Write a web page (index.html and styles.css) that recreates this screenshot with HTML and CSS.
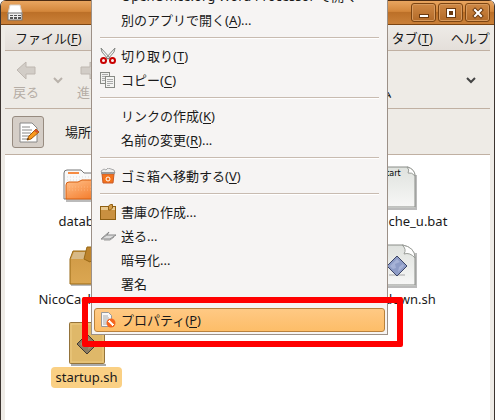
FILE: index.html
```html
<!DOCTYPE html>
<html lang="ja">
<head>
    <meta charset="UTF-8">
    <meta name="viewport" content="width=device-width, initial-scale=1.0">
    <title>ファイルブラウザ</title>
    <link rel="stylesheet" href="styles.css">
</head>
<body>
    <div class="window">
        <header class="titlebar">
            <svg class="app-icon" width="16" height="18" viewBox="0 0 16 18">
                <path d="M3 1h10l2 9H1z" fill="#fff" stroke="#d8d2cc"/>
                <rect x="1" y="9" width="14" height="7" fill="#eee" stroke="#777"/>
                <path d="M3 11h3v1H3zM7 11h3v1H7zM11 11h3v1h-3zM3 13h3v2H3zM7 13h3v2H7zM11 13h3v2h-3z" fill="#555"/>
            </svg>
            <div class="window-buttons">
                <button aria-label="最小化"><svg width="12" height="12" viewBox="0 0 12 12"><path d="M1 7h10v4H1z" fill="#6b3a10"/><path d="M2 8h8v2H2z" fill="#fff"/></svg></button>
                <button aria-label="最大化"><svg width="12" height="12" viewBox="0 0 12 12"><path d="M1 1h10v10H1z" fill="#6b3a10"/><path fill-rule="evenodd" d="M2 2h8v8H2zM4 4v4h4V4z" fill="#fff"/></svg></button>
                <button aria-label="閉じる"><svg width="12" height="12" viewBox="0 0 12 12"><path d="M3 3l6 6M9 3l-6 6" stroke="#6b3a10" stroke-width="4" stroke-linecap="square"/><path d="M3 3l6 6M9 3l-6 6" stroke="#fff" stroke-width="2" stroke-linecap="square"/></svg></button>
            </div>
        </header>

        <nav class="menubar">
            <a href="#">ファイル(<u>F</u>)</a>
            <a href="#">編集(<u>E</u>)</a>
            <a href="#">表示(<u>V</u>)</a>
            <a href="#">移動(<u>G</u>)</a>
            <a href="#">ブックマーク(<u>B</u>)</a>
            <a href="#">タブ(<u>T</u>)</a>
            <a href="#">ヘルプ(<u>H</u>)</a>
        </nav>

        <div class="toolbar">
            <button class="tool" disabled>
                <svg width="24" height="24" viewBox="0 0 24 24"><path d="M3 12l9-8v5h9v7h-9v5z" fill="#d2cdc7" stroke="#beb7b0" stroke-linejoin="round"/></svg>
                戻る
            </button>
            <button class="arrow" disabled aria-label="戻る履歴"><svg width="12" height="8" viewBox="0 0 12 8"><path d="M2 2l4 4 4-4" fill="none" stroke="#b9b2ab" stroke-width="2"/></svg></button>
            <button class="tool" disabled>
                <svg width="24" height="24" viewBox="0 0 24 24"><path d="M21 12l-9-8v5H3v7h9v5z" fill="#d2cdc7" stroke="#beb7b0" stroke-linejoin="round"/></svg>
                進む
            </button>
            <button class="tool home">
                <svg width="24" height="24" viewBox="0 0 24 24"><path d="M3 12l9-9 9 9h-3v9H6v-9z" fill="#e8a060" stroke="#9c5d21"/></svg>
                ホーム
            </button>
            <button class="arrow more" aria-label="その他"><svg width="12" height="8" viewBox="0 0 12 8"><path d="M2 2l4 4 4-4" fill="none" stroke="#444" stroke-width="2"/></svg></button>
        </div>

        <div class="location">
            <button class="toggle" aria-label="場所を編集">
                <svg width="24" height="24" viewBox="0 0 24 24">
                    <path d="M4 3h12l5 5v14H4z" fill="#fff" stroke="#888"/>
                    <path d="M6 7h8M6 10h10M6 13h9M6 16h7M6 19h7" stroke="#888"/>
                    <path d="M20 9l3 3-8 7-4 1 2-4z" fill="#fa9a1e" stroke="#a65a08"/>
                    <path d="M20 9l3 3-2 1-3-2z" fill="#d3542c"/>
                    <path d="M11 20l1-2 1 1z" fill="#222"/>
                </svg>
            </button>
            <span>場所:</span>
        </div>

        <main class="files">
            <div class="file">
                <svg width="48" height="48" viewBox="0 0 48 48">
                    <defs>
                        <linearGradient id="folder" x2="1" y2="1"><stop stop-color="#ffc08a"/><stop offset="1" stop-color="#f26c15"/></linearGradient>
                        <linearGradient id="paper" x2="0" y2="1"><stop stop-color="#dfe2de"/><stop offset="1" stop-color="#f7f7f6"/></linearGradient>
                        <linearGradient id="carton" x2="0" y2="1"><stop stop-color="#cf9945"/><stop offset="1" stop-color="#dba752"/></linearGradient>
                    </defs>
                    <path d="M3 38h43" stroke="#bbb" stroke-width="2"/>
                    <path d="M1 36V10q0-3 3-3h14l3 3h23q3 0 3 3v23z" fill="#f8f8f8" stroke="#777"/>
                    <path d="M5 10h11" stroke="#f68b42" stroke-width="2"/>
                    <path d="M4 14h40M4 17h40" stroke="#ddd" stroke-dasharray="1 2"/>
                    <path d="M3 36V22q0-3 3-3h9l4-2h27v19z" fill="url(#folder)" stroke="#d75e0e"/>
                    <path d="M6 24h38M6 27h38" stroke="#ffc99c" stroke-dasharray="1 2" opacity=".5"/>
                </svg>
                <span>database</span>
            </div>
            <div class="file last">
                <svg width="48" height="48" viewBox="0 0 48 48">
                    <path d="M8 46h35V12" fill="none" stroke="#bbb" stroke-width="2"/>
                    <path d="M7 4h28q7 3 7 9v31H7z" fill="url(#paper)" stroke="#8a8d88"/>
                    <path d="M34 4q3 3 1 6 4-1 7 3 0-7-8-9z" fill="#fff" stroke="#9a9d98"/>
                    <text class="preview" x="9" y="13">start</text>
                </svg>
                <span>NicoCache_u.bat</span>
            </div>
            <div class="file">
                <svg width="48" height="48" viewBox="0 0 48 48">
                    <path d="M8 44h34" stroke="#bbb" stroke-width="2"/>
                    <path d="M7 18l3-8h29l3 8v25H7z" fill="url(#carton)" stroke="#986815"/>
                    <path d="M8 18l3-7h27l3 7z" fill="#d7b987"/>
                    <path d="M21 18l3-12h6v12l-3 3z" fill="#bd832c" stroke="#986815"/>
                </svg>
                <span>NicoCache_u.sh</span>
            </div>
            <div class="file last">
                <svg width="48" height="48" viewBox="0 0 48 48">
                    <path d="M8 46h35V12" fill="none" stroke="#bbb" stroke-width="2"/>
                    <path d="M7 4h23q12 3 12 13v27H7z" fill="url(#paper)" stroke="#8a8d88"/>
                    <path d="M29 4q5 4 2 9 6-2 11 4 0-11-13-13z" fill="#fff" stroke="#9a9d98"/>
                    <path d="M16 34h16" stroke="#ccc" stroke-width="2"/>
                    <path d="M24 15l10 10-10 10-10-10z" fill="#8e9cc6" stroke="#3b4566"/>
                    <path d="M17 25l7-7 3 3-5 2 1 4-3 1zM25 31l1-5 4-3 1 2z" fill="#a6b2d6"/>
                </svg>
                <span>shutdown.sh</span>
            </div>
            <div class="file selected">
                <svg width="48" height="48" viewBox="0 0 48 48">
                    <path d="M8 46h35" stroke="#aaa" stroke-width="2"/>
                    <rect x="6.5" y="3.5" width="35" height="41" rx="1" fill="#dfb869" stroke="#94733a"/>
                    <path d="M8 5h32v38H8z" fill="none" stroke="#edcb83"/>
                    <path d="M24 15l10 10-10 10-10-10z" fill="#8b7c62" stroke="#403a32"/>
                    <path d="M17 25l7-7 3 3-5 2 1 4-3 1zM25 31l1-5 4-3 1 2z" fill="#a6926f"/>
                </svg>
                <span>startup.sh</span>
            </div>
        </main>

        <!-- Context menu of the selected file -->
        <div class="context-menu">
            <button class="item">OpenOffice.org Word Processor で開く</button>
            <button class="item">別のアプリで開く(<u>A</u>)...</button>
            <hr>
            <button class="item">
                <svg width="16" height="16" viewBox="0 0 16 16">
                    <path d="M1 0l9 10-2 1-6-7zM15 0L6 10l2 1 6-7z" fill="#f5f5f5" stroke="#858985"/>
                    <circle cx="3.5" cy="12.5" r="2.5" fill="none" stroke="#c90000" stroke-width="2"/>
                    <circle cx="12.5" cy="12.5" r="2.5" fill="none" stroke="#c90000" stroke-width="2"/>
                </svg>
                切り取り(<u>T</u>)
            </button>
            <button class="item">
                <svg width="16" height="16" viewBox="0 0 16 16">
                    <rect x="0.5" y="0.5" width="9" height="11" fill="#f1f1ef" stroke="#888a85"/>
                    <path d="M2 2.5h6M2 4.5h6M2 6.5h6M2 8.5h3" stroke="#aaa"/>
                    <rect x="5.5" y="4.5" width="9" height="11" fill="#f4f4f2" stroke="#888a85"/>
                    <path d="M7 7.5h6M7 9.5h6M7 11.5h6M7 13.5h3" stroke="#aaa"/>
                </svg>
                コピー(<u>C</u>)
            </button>
            <hr>
            <button class="item">リンクの作成(<u>K</u>)</button>
            <button class="item">名前の変更(<u>R</u>)...</button>
            <hr>
            <button class="item">
                <svg width="16" height="16" viewBox="0 0 16 16">
                    <path d="M2 5l-1-2 3-2 2 1 2-2 3 1 3 1 1 3z" fill="#eee" stroke="#aaa"/>
                    <path d="M2 6h12l-1 9H3z" fill="#f4731c" stroke="#c75b2a"/>
                    <path d="M1 5h14" stroke="#999" stroke-width="2"/>
                    <circle cx="8" cy="11" r="2" fill="none" stroke="#fff"/>
                </svg>
                ゴミ箱へ移動する(<u>V</u>)
            </button>
            <hr>
            <button class="item">
                <svg width="16" height="16" viewBox="0 0 16 16">
                    <rect x="0.5" y="2.5" width="15" height="13" fill="#c99040" stroke="#8f5f12"/>
                    <path d="M1 4.5h14" stroke="#e8c88f" stroke-width="3"/>
                    <path d="M8.5 6V2l2-1.5h2V4l-2 2z" fill="#d39b47" stroke="#8f5f12"/>
                </svg>
                書庫の作成...
            </button>
            <button class="item">
                <svg width="16" height="16" viewBox="0 0 16 16">
                    <path d="M1 11l8-7-2 3h9l-6 4z" fill="#ddd" stroke="#888"/>
                    <path d="M1 11l6-4M4 12h6l4-3" fill="none" stroke="#999"/>
                </svg>
                送る...
            </button>
            <button class="item">暗号化...</button>
            <button class="item">署名</button>
            <hr>
            <button class="item active">
                <svg width="16" height="16" viewBox="0 0 16 16">
                    <path d="M1.5 0.5h7l3 3v11h-10z" fill="#f7f7f7" stroke="#999"/>
                    <path d="M3 4h5M3 6h6M3 8h6M3 10h4M3 12h4" stroke="#aaa"/>
                    <circle cx="11" cy="11" r="4.5" fill="#f4641e"/>
                    <path d="M9 9l4 4" stroke="#fff" stroke-width="2"/>
                    <path d="M8 10l2-2M12 14l2-2" stroke="#fff"/>
                </svg>
                プロパティ(<u>P</u>)
            </button>
        </div>
        <div class="highlight"></div>
    </div>
</body>
</html>
```
FILE: styles.css
```css
* {
    box-sizing: border-box;
}

body {
    margin: 0;
    background-color: #fff;
    color: #1a1a1a;
    font-family: "Noto Sans", "Noto Sans CJK JP", sans-serif;
    font-size: 13px;
    line-height: 20px;
}

button {
    padding: 0;
    border: none;
    background: none;
    color: inherit;
    font: inherit;
}

svg {
    display: block;
    flex-shrink: 0;
}

.window {
    position: relative;
    display: flex;
    flex-direction: column;
    min-height: 100vh;
    padding: 0 4px;
    border: solid #3c3430;
    border-width: 0 1px;
    border-radius: 6px 6px 0 0;
    background-color: #eeebe6;
    overflow: hidden;
}

.titlebar {
    display: flex;
    justify-content: space-between;
    align-items: center;
    height: 25px;
    margin: 0 -4px;
    padding: 0 4px 0 6px;
    border-top: 1px solid #4b2b12;
    border-bottom: 1px solid #7c4512;
    background: linear-gradient(#e8a560, #d4873b 45%, #bc7028 50%, #ca8038);
}

.window-buttons {
    display: flex;
    gap: 2px;
}

.window-buttons button {
    display: flex;
    justify-content: center;
    align-items: center;
    width: 25px;
    height: 19px;
    border: 1px solid #7c4512;
    border-radius: 3px;
    background: linear-gradient(#cf8844, #b26a28);
    box-shadow: inset 0 0 0 1px #d79a5e;
}

.menubar {
    display: flex;
    align-items: center;
    gap: 18px;
    height: 26px;
    padding: 0 10px;
    border-bottom: 1px solid #c0b0a2;
    background: linear-gradient(#eeebe7, #e4dfda);
    white-space: nowrap;
    overflow: hidden;
}

.menubar a {
    color: inherit;
    text-decoration: none;
}

u {
    text-underline-offset: 2px;
}

.toolbar {
    display: flex;
    align-items: center;
    height: 58px;
    padding: 0 0 0 8px;
    border-bottom: 1px solid #c0b0a2;
}

.tool {
    display: flex;
    flex-direction: column;
    align-items: center;
}

.tool:disabled {
    color: #b5ada5;
}

.arrow {
    padding: 0 13px;
}

.home {
    margin-left: auto;
}

.more {
    margin-left: 60px;
}

.location {
    display: flex;
    align-items: center;
    gap: 21px;
    height: 46px;
    padding: 0 7px;
    border-bottom: 1px solid #c0b0a2;
}

.toggle {
    display: flex;
    justify-content: center;
    align-items: center;
    width: 32px;
    height: 32px;
    border: 1px solid #978b80;
    border-radius: 3px;
    background-color: #d5cec7;
}

.files {
    display: grid;
    grid-template-columns: repeat(3, 1fr);
    align-content: start;
    row-gap: 9px;
    flex: 1;
    padding: 8px 16px 8px 4px;
    background-color: #fff;
}

.file {
    display: flex;
    flex-direction: column;
    align-items: center;
    grid-column: 1;
}

.file.last {
    grid-column: 3;
}

.file span {
    padding: 0 4px;
    border-radius: 4px;
    line-height: 21px;
}

.file.selected span {
    background-color: #fad084;
}

.preview {
    font-family: "DejaVu Sans", sans-serif;
    font-size: 8px;
}

/* The menu runs past the top edge of the window */
.context-menu {
    position: absolute;
    left: 90px;
    bottom: 85px;
    width: 297px;
    padding: 2px;
    border: 1px solid #9c9087;
    background-color: #f6f4f3;
}

.item {
    display: flex;
    align-items: center;
    width: 100%;
    height: 24px;
    padding-left: 27px;
    white-space: nowrap;
    text-align: left;
}

.item svg {
    margin: 0 5px 0 -21px;
}

.item.active {
    border: 1px solid #b9813c;
    border-radius: 3px;
    background: linear-gradient(#ffc984, #fdbd68);
    padding-left: 26px;
}

hr {
    height: 2px;
    margin: 5px 6px;
    border: none;
    border-top: 1px solid #c8bbb0;
    background-color: #fff;
}

.highlight {
    position: absolute;
    left: 81px;
    bottom: 73px;
    width: 321px;
    height: 50px;
    border: 6px solid #f00;
    border-radius: 2px;
    pointer-events: none;
}

@media (max-width: 400px) {
    .context-menu {
        left: 40px;
        width: auto;
        right: 16px;
    }

    .highlight {
        left: 31px;
        right: 2px;
        width: auto;
    }
}
```
